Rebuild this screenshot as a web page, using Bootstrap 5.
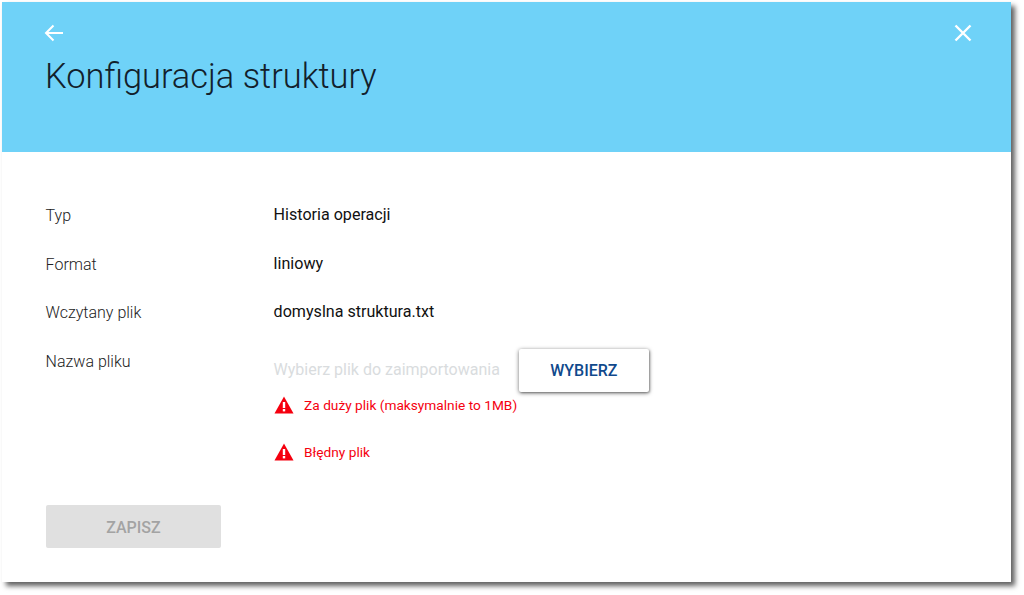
<!DOCTYPE html>
<html lang="pl">
<head>
<meta charset="utf-8">
<title>Konfiguracja struktury</title>
<link href="https://cdn.jsdelivr.net/npm/bootstrap@5.3.0/dist/css/bootstrap.min.css" rel="stylesheet">
<style>
html,body{height:595px;overflow:hidden;background:#fff;font-family:Roboto,sans-serif}
.sheet{width:1009px;height:580px;margin:2px 0 0 2px;background:#fff;box-shadow:4px 4px 5px rgba(0,0,0,.62)}
.head{height:150px;background:#6fd2f8;padding:20px 37px 0 41px}
.head-icon{display:block;width:22px;height:22px;color:#fff}
.head-title{font-size:34.4px;font-weight:300;line-height:44px;color:#12202b;margin:10px 0 0 2px}
.body-area{padding:40px 0 0 43.6px}
.field{height:48.6px;font-size:16px;line-height:48px}
.field-label{width:228px;font-weight:300;color:#222}
.field-value{color:#111;font-weight:400;font-size:16.1px;line-height:48px;margin-top:-1px}
.placeholder-text{color:#d9dcde;font-size:16px;font-weight:400;width:245px}
.pick-row{margin-top:11px}
.btn.pick-btn{width:130.500px;height:43px;padding:2px 0 0;background:#fff;color:#10498c;font-weight:500;font-size:16px;border:0;border-radius:2px;box-shadow:0 1px 4px rgba(0,0,0,.55),1px 1px 2px rgba(0,0,0,.25)}
.err{color:#f5000f;font-size:13.7px;line-height:20px}
.err-first{margin-top:3.500px}
.err-next{margin-top:26.500px}
.err svg{width:20px;height:18px;flex:none;margin-right:10.500px}
.save-btn.btn:disabled{width:175.500px;height:43px;padding:4px 0 0;background:#e0e0e0;color:#a3a3a3;font-weight:500;font-size:16px;border:0;border-radius:2px;margin-top:43px;opacity:1}
</style>
</head>
<body>
<div class="sheet">
  <div class="head">
    <div class="d-flex justify-content-between">
      <svg class="head-icon" viewBox="0 0 22 22" fill="none" stroke="currentColor" stroke-width="2"><path d="M20 11H3M10.500 3.500 3 11l7.500 7.500"/></svg>
      <svg class="head-icon" viewBox="0 0 22 22" fill="none" stroke="currentColor" stroke-width="2.400"><path d="M3.500 3.500l15 15M18.500 3.500l-15 15"/></svg>
    </div>
    <div class="head-title">Konfiguracja struktury</div>
  </div>
  <div class="body-area">
    <div class="field d-flex"><div class="field-label">Typ</div><div class="field-value">Historia operacji</div></div>
    <div class="field d-flex"><div class="field-label">Format</div><div class="field-value">liniowy</div></div>
    <div class="field d-flex"><div class="field-label">Wczytany plik</div><div class="field-value">domyslna struktura.txt</div></div>
    <div class="d-flex">
      <div class="field-label field">Nazwa pliku</div>
      <div>
        <div class="pick-row d-flex align-items-center">
          <div class="placeholder-text">Wybierz plik do zaimportowania</div>
          <button type="button" class="btn pick-btn">WYBIERZ</button>
        </div>
        <div class="err err-first d-flex align-items-center">
          <svg viewBox="0 0 20 18"><path fill="#f5000f" d="M10 .5 19.500 17.500H.5z"/><rect x="8.800" y="6" width="2.400" height="6" fill="#fff"/><rect x="8.800" y="13" width="2.400" height="2.400" fill="#fff"/></svg>
          <span>Za duży plik (maksymalnie to 1MB)</span>
        </div>
        <div class="err err-next d-flex align-items-center">
          <svg viewBox="0 0 20 18"><path fill="#f5000f" d="M10 .5 19.500 17.500H.5z"/><rect x="8.800" y="6" width="2.400" height="6" fill="#fff"/><rect x="8.800" y="13" width="2.400" height="2.400" fill="#fff"/></svg>
          <span>Błędny plik</span>
        </div>
      </div>
    </div>
    <button type="button" class="btn save-btn" disabled>ZAPISZ</button>
  </div>
</div>
<script src="https://cdn.jsdelivr.net/npm/bootstrap@5.3.0/dist/js/bootstrap.bundle.min.js"></script>
</body>
</html>
